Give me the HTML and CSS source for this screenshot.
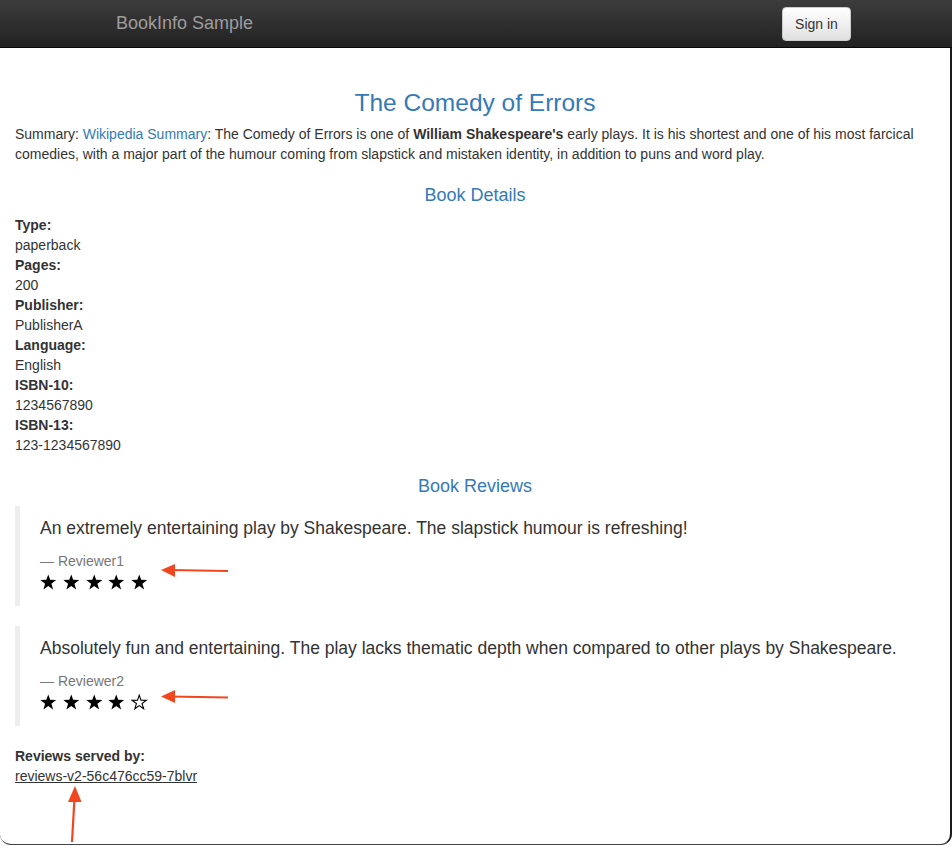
FILE: index.html
```html
<!DOCTYPE html>
<html>
<head>
<meta charset="utf-8">
<title>BookInfo Sample</title>
<link rel="stylesheet" href="styles.css">
</head>
<body>
<div class="window">
  <nav class="navbar">
    <div class="navbar-inner">
      <span class="brand">BookInfo Sample</span>
      <button class="btn-signin" type="button">Sign in</button>
    </div>
  </nav>
  <main class="content">
    <h3 class="title">The Comedy of Errors</h3>
    <p class="summary">Summary: <a href="#" class="link">Wikipedia Summary</a>: The Comedy of Errors is one of <b>William Shakespeare's</b> early plays. It is his shortest and one of his most farcical comedies, with a major part of the humour coming from slapstick and mistaken identity, in addition to puns and word play.</p>
    <h4 class="section">Book Details</h4>
    <dl class="details">
      <dt>Type:</dt><dd>paperback</dd>
      <dt>Pages:</dt><dd>200</dd>
      <dt>Publisher:</dt><dd>PublisherA</dd>
      <dt>Language:</dt><dd>English</dd>
      <dt>ISBN-10:</dt><dd>1234567890</dd>
      <dt>ISBN-13:</dt><dd>123-1234567890</dd>
    </dl>
    <h4 class="section">Book Reviews</h4>
    <blockquote class="review">
      <p class="review-text">An extremely entertaining play by Shakespeare. The slapstick humour is refreshing!</p>
      <footer class="reviewer">Reviewer1</footer>
      <div class="stars">
        <svg class="star" viewBox="0 0 24 23"><polygon class="full" points="12,0.5 14.8,8.4 23.5,8.6 16.6,13.9 19.1,22.4 12,17.3 4.9,22.4 7.4,13.9 0.5,8.6 9.2,8.4"/></svg>
        <svg class="star" viewBox="0 0 24 23"><polygon class="full" points="12,0.5 14.8,8.4 23.5,8.6 16.6,13.9 19.1,22.4 12,17.3 4.9,22.4 7.4,13.9 0.5,8.6 9.2,8.4"/></svg>
        <svg class="star" viewBox="0 0 24 23"><polygon class="full" points="12,0.5 14.8,8.4 23.5,8.6 16.6,13.9 19.1,22.4 12,17.3 4.9,22.4 7.4,13.9 0.5,8.6 9.2,8.4"/></svg>
        <svg class="star" viewBox="0 0 24 23"><polygon class="full" points="12,0.5 14.8,8.4 23.5,8.6 16.6,13.9 19.1,22.4 12,17.3 4.9,22.4 7.4,13.9 0.5,8.6 9.2,8.4"/></svg>
        <svg class="star" viewBox="0 0 24 23"><polygon class="full" points="12,0.5 14.8,8.4 23.5,8.6 16.6,13.9 19.1,22.4 12,17.3 4.9,22.4 7.4,13.9 0.5,8.6 9.2,8.4"/></svg>
      </div>
    </blockquote>
    <blockquote class="review">
      <p class="review-text">Absolutely fun and entertaining. The play lacks thematic depth when compared to other plays by Shakespeare.</p>
      <footer class="reviewer">Reviewer2</footer>
      <div class="stars">
        <svg class="star" viewBox="0 0 24 23"><polygon class="full" points="12,0.5 14.8,8.4 23.5,8.6 16.6,13.9 19.1,22.4 12,17.3 4.9,22.4 7.4,13.9 0.5,8.6 9.2,8.4"/></svg>
        <svg class="star" viewBox="0 0 24 23"><polygon class="full" points="12,0.5 14.8,8.4 23.5,8.6 16.6,13.9 19.1,22.4 12,17.3 4.9,22.4 7.4,13.9 0.5,8.6 9.2,8.4"/></svg>
        <svg class="star" viewBox="0 0 24 23"><polygon class="full" points="12,0.5 14.8,8.4 23.5,8.6 16.6,13.9 19.1,22.4 12,17.3 4.9,22.4 7.4,13.9 0.5,8.6 9.2,8.4"/></svg>
        <svg class="star" viewBox="0 0 24 23"><polygon class="full" points="12,0.5 14.8,8.4 23.5,8.6 16.6,13.9 19.1,22.4 12,17.3 4.9,22.4 7.4,13.9 0.5,8.6 9.2,8.4"/></svg>
        <svg class="star" viewBox="0 0 24 23"><polygon class="empty" points="12,1.5 14.5,8.9 22.3,9.1 16.1,13.8 18.4,21.4 12,16.8 5.6,21.4 7.9,13.8 1.7,9.1 9.5,8.9"/></svg>
      </div>
    </blockquote>
    <dl class="served">
      <dt>Reviews served by:</dt>
      <dd><u>reviews-v2-56c476cc59-7blvr</u></dd>
    </dl>
  </main>
  <svg class="annotations" width="952" height="846" viewBox="0 0 952 846">
    <line x1="228" y1="571" x2="170" y2="570" class="arrow-line"/>
    <polygon points="161,570 175,564 175,577" class="arrow-head"/>
    <line x1="228" y1="697.5" x2="170" y2="696.5" class="arrow-line"/>
    <polygon points="161,696.5 175,690 175,703" class="arrow-head"/>
    <line x1="72" y1="842" x2="74.5" y2="798" class="arrow-line"/>
    <polygon points="75,786 81.5,802 68,802" class="arrow-head"/>
  </svg>
</div>
</body>
</html>
```
FILE: styles.css
```css
html, body {
  margin: 0;
  padding: 0;
  background: #fff;
}
body {
  font-family: "Liberation Sans", Arial, Helvetica, sans-serif;
  font-size: 14px;
  line-height: 20px;
  color: #333;
}
.window {
  position: relative;
  width: 952px;
  height: 846px;
  overflow: hidden;
}
.navbar {
  height: 48px;
  background: linear-gradient(to bottom, #3c3c3c 0%, #222 100%);
  border-bottom: 1px solid #080808;
  box-sizing: border-box;
}
.navbar-inner {
  box-sizing: border-box;
  width: 750px;
  margin: 0 auto;
  padding: 0 0 0 15px;
  display: flex;
  align-items: center;
  justify-content: space-between;
  height: 47px;
}
.brand {
  font-size: 18px;
  color: #9d9d9d;
  line-height: 20px;
  margin-top: -1px;
}
.btn-signin {
  font-family: "Liberation Sans", Arial, sans-serif;
  font-size: 14px;
  color: #333;
  height: 34px;
  width: 69px;
  padding: 0;
  border: 1px solid #ccc;
  border-radius: 4px;
  background: linear-gradient(to bottom, #fff 0%, #e0e0e0 100%);
  box-shadow: inset 0 1px 0 rgba(255,255,255,.15), 0 1px 1px rgba(0,0,0,.075);
  margin: 0;
}
.content {
  box-sizing: border-box;
  height: 797px;
  padding: 1px 15px 0 15px;
  border-right: 2px solid #1c1c1c;
  border-bottom: 1px solid #444;
  border-bottom-left-radius: 11px;
  border-bottom-right-radius: 11px;
}
.title {
  margin: 41px 0 0;
  font-size: 24.5px;
  font-weight: 500;
  line-height: 26px;
  text-align: center;
  color: #337ab7;
}
.summary {
  margin: 8px 0 21px;
  padding-right: 2px;
}
.link {
  color: #337ab7;
  text-decoration: none;
}
.section {
  margin: 10px 0 10px;
  font-size: 18px;
  font-weight: 500;
  line-height: 20px;
  text-align: center;
  color: #337ab7;
}
.details {
  margin: 0 0 21px;
}
.details dt, .served dt {
  font-weight: bold;
}
.details dd, .served dd {
  margin: 0;
}
.review {
  margin: 0 0 20px;
  padding: 10px 20px;
  border-left: 5px solid #eee;
  font-size: 17.5px;
  line-height: 25px;
}
.review-text {
  margin: 0 0 10px;
}
.reviewer {
  font-size: 14px;
  line-height: 20px;
  color: #777;
}
.reviewer::before {
  content: "\2014 \00A0";
}
.stars {
  height: 25px;
  display: flex;
  align-items: center;
  gap: 6.3px;
  padding-bottom: 4px;
  box-sizing: border-box;
}
.star {
  width: 16.5px;
  height: 16px;
}
.star .full {
  fill: #000;
}
.star .empty {
  fill: none;
  stroke: #000;
  stroke-width: 1.6;
  stroke-linejoin: miter;
}
.served {
  margin: 0;
}
.served u {
  color: #333;
}
.annotations {
  position: absolute;
  top: 0;
  left: 0;
  pointer-events: none;
}
.arrow-line {
  stroke: #f2461f;
  stroke-width: 2.2;
}
.arrow-head {
  fill: #f2461f;
}
```
